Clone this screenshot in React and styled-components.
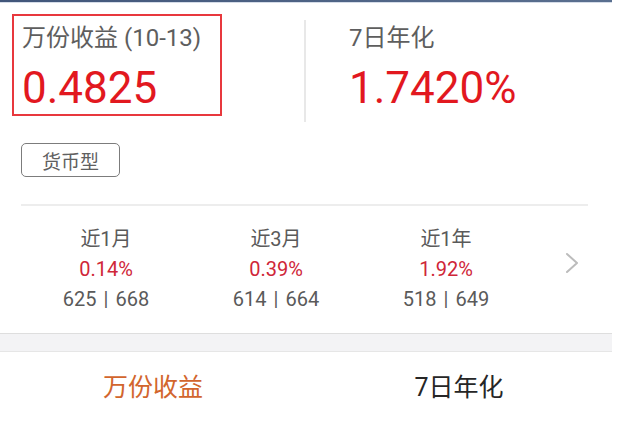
import React from "react";
import styled, { createGlobalStyle } from "styled-components";

const GlobalStyle = createGlobalStyle`
  html, body {
    margin: 0;
    padding: 0;
    background: #ffffff;
  }
  body {
    font-family: Roboto, "Noto Sans CJK SC", "Noto Sans", sans-serif;
    -webkit-font-smoothing: antialiased;
  }
`;

const Page = styled.div`
  width: 612px;
  background: #ffffff;
`;

const TopLine = styled.div`
  height: 2px;
  background: linear-gradient(90deg, #41567a, #5a6f8f);
  box-shadow: 0 1px 0 #d5dce8;
`;

const Header = styled.div`
  display: flex;
  align-items: flex-start;
  padding: 12px 0 0 12px;
`;

const LeftCol = styled.div`
  width: 292px;
`;

const HighlightBox = styled.div`
  width: 210px;
  height: 102px;
  box-sizing: border-box;
  border: 2px solid #e8383d;
  padding: 8px 0 0 8px;
`;

const Label = styled.div`
  font-size: 24px;
  line-height: 28px;
  color: #5e5e5e;
  white-space: nowrap;
`;

const BigValue = styled.div`
  margin-top: 11px;
  font-size: 44px;
  line-height: 50px;
  color: #e2181f;
  white-space: nowrap;
`;

const VDivider = styled.div`
  width: 2px;
  height: 102px;
  margin-top: 6px;
  background: #e8e8e8;
`;

const RightCol = styled.div`
  padding: 10px 0 0 43px;
`;

const TagRow = styled.div`
  padding: 21px 0 0 21px;
`;

const Tag = styled.div`
  width: 99px;
  height: 34px;
  box-sizing: border-box;
  border: 1.5px solid #7c7c7c;
  border-radius: 5px;
  display: flex;
  align-items: center;
  justify-content: center;
  font-size: 19px;
  color: #606060;
`;

const HDivider = styled.div`
  height: 2px;
  margin: 27px 24px 0 21px;
  background: #ededed;
`;

const Stats = styled.div`
  display: flex;
  padding: 18px 0 19px 21px;
`;

const StatCol = styled.div`
  width: 170px;
  display: flex;
  flex-direction: column;
  align-items: center;
`;

const StatLine = styled.div`
  font-size: 20px;
  line-height: 30px;
  color: ${({ $color }) => $color || "#5a5a5a"};
  white-space: nowrap;
`;

const Sep = styled.span`
  margin: 0 7px;
`;

const ChevronArea = styled.div`
  flex: 1;
  display: flex;
  align-items: center;
  justify-content: center;
  padding-bottom: 12px;
`;

const Band = styled.div`
  height: 17px;
  background: #f3f3f5;
  border-top: 1px solid #dedede;
  border-bottom: 1px solid #e6e6e6;
`;

const Tabs = styled.div`
  display: flex;
  padding-top: 18px;
  height: 53px;
`;

const Tab = styled.div`
  flex: 1;
  text-align: center;
  font-size: 25px;
  line-height: 36px;
  color: ${({ $active }) => ($active ? "#d2652d" : "#262626")};
`;

const stats = [
  { period: "近1月", rate: "0.14%", rank: "625", total: "668" },
  { period: "近3月", rate: "0.39%", rank: "614", total: "664" },
  { period: "近1年", rate: "1.92%", rank: "518", total: "649" },
];

const Chevron = () => (
  <svg width="14" height="22" viewBox="0 0 14 22">
    <polyline
      points="2,2 12,11 2,20"
      fill="none"
      stroke="#bcbcbc"
      strokeWidth="2"
      strokeLinecap="round"
      strokeLinejoin="round"
    />
  </svg>
);

const App = () => {
  return (
    <Page>
      <GlobalStyle />
      <TopLine />
      <Header>
        <LeftCol>
          <HighlightBox>
            <Label>万份收益 (10-13)</Label>
            <BigValue>0.4825</BigValue>
          </HighlightBox>
        </LeftCol>
        <VDivider />
        <RightCol>
          <Label>7日年化</Label>
          <BigValue>1.7420%</BigValue>
        </RightCol>
      </Header>

      <TagRow>
        <Tag>货币型</Tag>
      </TagRow>

      <HDivider />

      <Stats>
        {stats.map((s) => (
          <StatCol key={s.period}>
            <StatLine>{s.period}</StatLine>
            <StatLine $color="#cf2638">{s.rate}</StatLine>
            <StatLine>
              {s.rank}
              <Sep>|</Sep>
              {s.total}
            </StatLine>
          </StatCol>
        ))}
        <ChevronArea>
          <Chevron />
        </ChevronArea>
      </Stats>

      <Band />

      <Tabs>
        <Tab $active>万份收益</Tab>
        <Tab>7日年化</Tab>
      </Tabs>
    </Page>
  );
};

export default App;
